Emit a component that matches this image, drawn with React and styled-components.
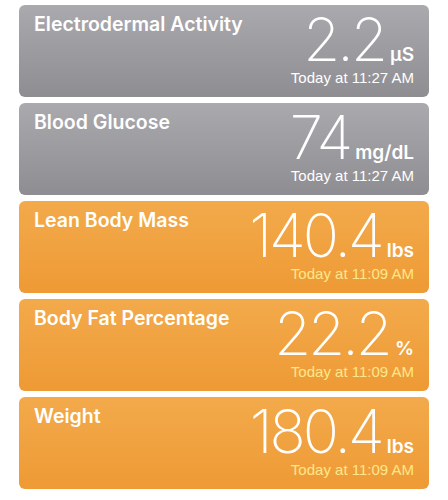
import React from 'react';
import styled, { createGlobalStyle } from 'styled-components';

const GlobalStyle = createGlobalStyle`
  body {
    margin: 0;
    background: #ffffff;
    font-family: "Liberation Sans", Arial, sans-serif;
  }
`;

const List = styled.div`
  display: flex;
  flex-direction: column;
  gap: 6px;
  padding: 5px 19px;
`;

const Card = styled.div`
  display: flex;
  justify-content: space-between;
  align-items: flex-start;
  height: 92px;
  box-sizing: border-box;
  padding: 0 15px;
  border-radius: 6px;
  background: ${p => p.orange
    ? 'linear-gradient(to bottom, #f3aa4b, #ee9a35)'
    : 'linear-gradient(to bottom, #aaa9ae, #8e8d92)'};
  color: #ffffff;
`;

const Title = styled.div`
  margin-top: 9px;
  font-family: Inter, "Liberation Sans", sans-serif;
  font-size: 19.5px;
  line-height: 20px;
  font-weight: 600;
`;

const Reading = styled.div`
  display: flex;
  flex-direction: column;
  align-items: flex-end;
  margin-top: 4px;
`;

const ValueRow = styled.div`
  display: flex;
  align-items: baseline;
  height: 60px;
`;

const Value = styled.span`
  font-family: Inter, "Liberation Sans", sans-serif;
  font-weight: 200;
  font-size: 60px;
  line-height: 60px;
  letter-spacing: -3px;
`;

const Unit = styled.span`
  margin-left: 5px;
  font-family: Inter, "Liberation Sans", sans-serif;
  font-size: 19px;
  font-weight: 600;
`;

const Time = styled.div`
  margin-top: 1px;
  font-size: 15px;
  line-height: 15px;
  color: ${p => p.orange ? '#fde78a' : '#ffffff'};
`;

const items = [
  { title: 'Electrodermal Activity', value: '2.2', unit: 'µS', time: 'Today at 11:27 AM' },
  { title: 'Blood Glucose', value: '74', unit: 'mg/dL', time: 'Today at 11:27 AM' },
  { title: 'Lean Body Mass', value: '140.4', unit: 'lbs', time: 'Today at 11:09 AM', orange: true },
  { title: 'Body Fat Percentage', value: '22.2', unit: '%', time: 'Today at 11:09 AM', orange: true },
  { title: 'Weight', value: '180.4', unit: 'lbs', time: 'Today at 11:09 AM', orange: true },
];

export default function App() {
  return (
    <>
      <GlobalStyle />
      <List>
        {items.map(item => (
          <Card key={item.title} orange={item.orange}>
            <Title>{item.title}</Title>
            <Reading>
              <ValueRow>
                <Value>{item.value}</Value>
                <Unit>{item.unit}</Unit>
              </ValueRow>
              <Time orange={item.orange}>{item.time}</Time>
            </Reading>
          </Card>
        ))}
      </List>
    </>
  );
}
